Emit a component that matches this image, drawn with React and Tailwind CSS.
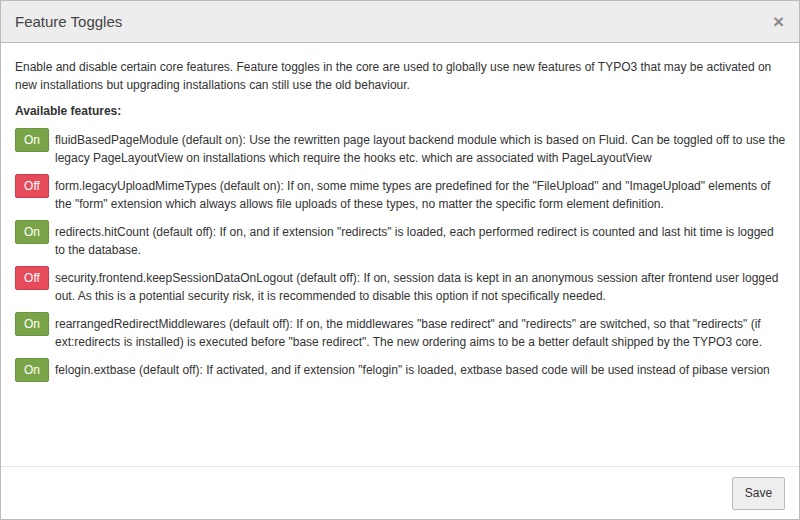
import React from "react";

const features = [
  { on: true, text: "fluidBasedPageModule (default on): Use the rewritten page layout backend module which is based on Fluid. Can be toggled off to use the legacy PageLayoutView on installations which require the hooks etc. which are associated with PageLayoutView" },
  { on: false, text: 'form.legacyUploadMimeTypes (default on): If on, some mime types are predefined for the "FileUpload" and "ImageUpload" elements of the "form" extension which always allows file uploads of these types, no matter the specific form element definition.' },
  { on: true, text: 'redirects.hitCount (default off): If on, and if extension "redirects" is loaded, each performed redirect is counted and last hit time is logged to the database.' },
  { on: false, text: "security.frontend.keepSessionDataOnLogout (default off): If on, session data is kept in an anonymous session after frontend user logged out. As this is a potential security risk, it is recommended to disable this option if not specifically needed." },
  { on: true, text: 'rearrangedRedirectMiddlewares (default off): If on, the middlewares "base redirect" and "redirects" are switched, so that "redirects" (if ext:redirects is installed) is executed before "base redirect". The new ordering aims to be a better default shipped by the TYPO3 core.' },
  { on: true, text: 'felogin.extbase (default off): If activated, and if extension "felogin" is loaded, extbase based code will be used instead of pibase version' },
];

export default function App() {
  return (
    <div
      className="w-[800px] h-[520px] flex flex-col border border-[#bbbbbb] bg-white text-[#333333] text-[12px] leading-[18px]"
      style={{ fontFamily: '"Liberation Sans", Arial, sans-serif' }}
    >
      <div className="h-[42px] shrink-0 flex items-center justify-between pl-[14px] pr-[15px] bg-[#ededed] border-b border-[#bbbbbb]">
        <h1 className="text-[15px] leading-[20px] text-[#444444]">Feature Toggles</h1>
        <span className="text-[#8a8a8a] text-[19px] font-bold leading-none">×</span>
      </div>
      <div className="flex-1 pt-[15px] pl-[14px] pr-[13px]">
        <p>
          Enable and disable certain core features. Feature toggles in the core are used to globally use new features of TYPO3 that may be activated on new installations but upgrading installations can still use the old behaviour.
        </p>
        <p className="mt-[8px] font-bold">Available features:</p>
        <div className="mt-[8px] flex flex-col gap-[7px]">
          {features.map((f, i) => (
            <div key={i} className="flex items-start gap-[6px]">
              <span
                className={
                  f.on
                    ? "shrink-0 w-[34px] h-[24px] flex items-center justify-center rounded-[2px] border border-[#6a9640] bg-[#79a548] text-white"
                    : "shrink-0 w-[34px] h-[24px] flex items-center justify-center rounded-[2px] border border-[#d03a4b] bg-[#e64b5c] text-white"
                }
              >
                {f.on ? "On" : "Off"}
              </span>
              <p className="pt-[3px]">{f.text}</p>
            </div>
          ))}
        </div>
      </div>
      <div className="h-[53px] shrink-0 border-t border-[#e5e5e5] flex items-center justify-end pr-[14px]">
        <button className="w-[53px] h-[33px] rounded-[2px] border border-[#bbbbbb] bg-[#eeeeee] text-[#333333] text-[12px]">
          Save
        </button>
      </div>
    </div>
  );
}
